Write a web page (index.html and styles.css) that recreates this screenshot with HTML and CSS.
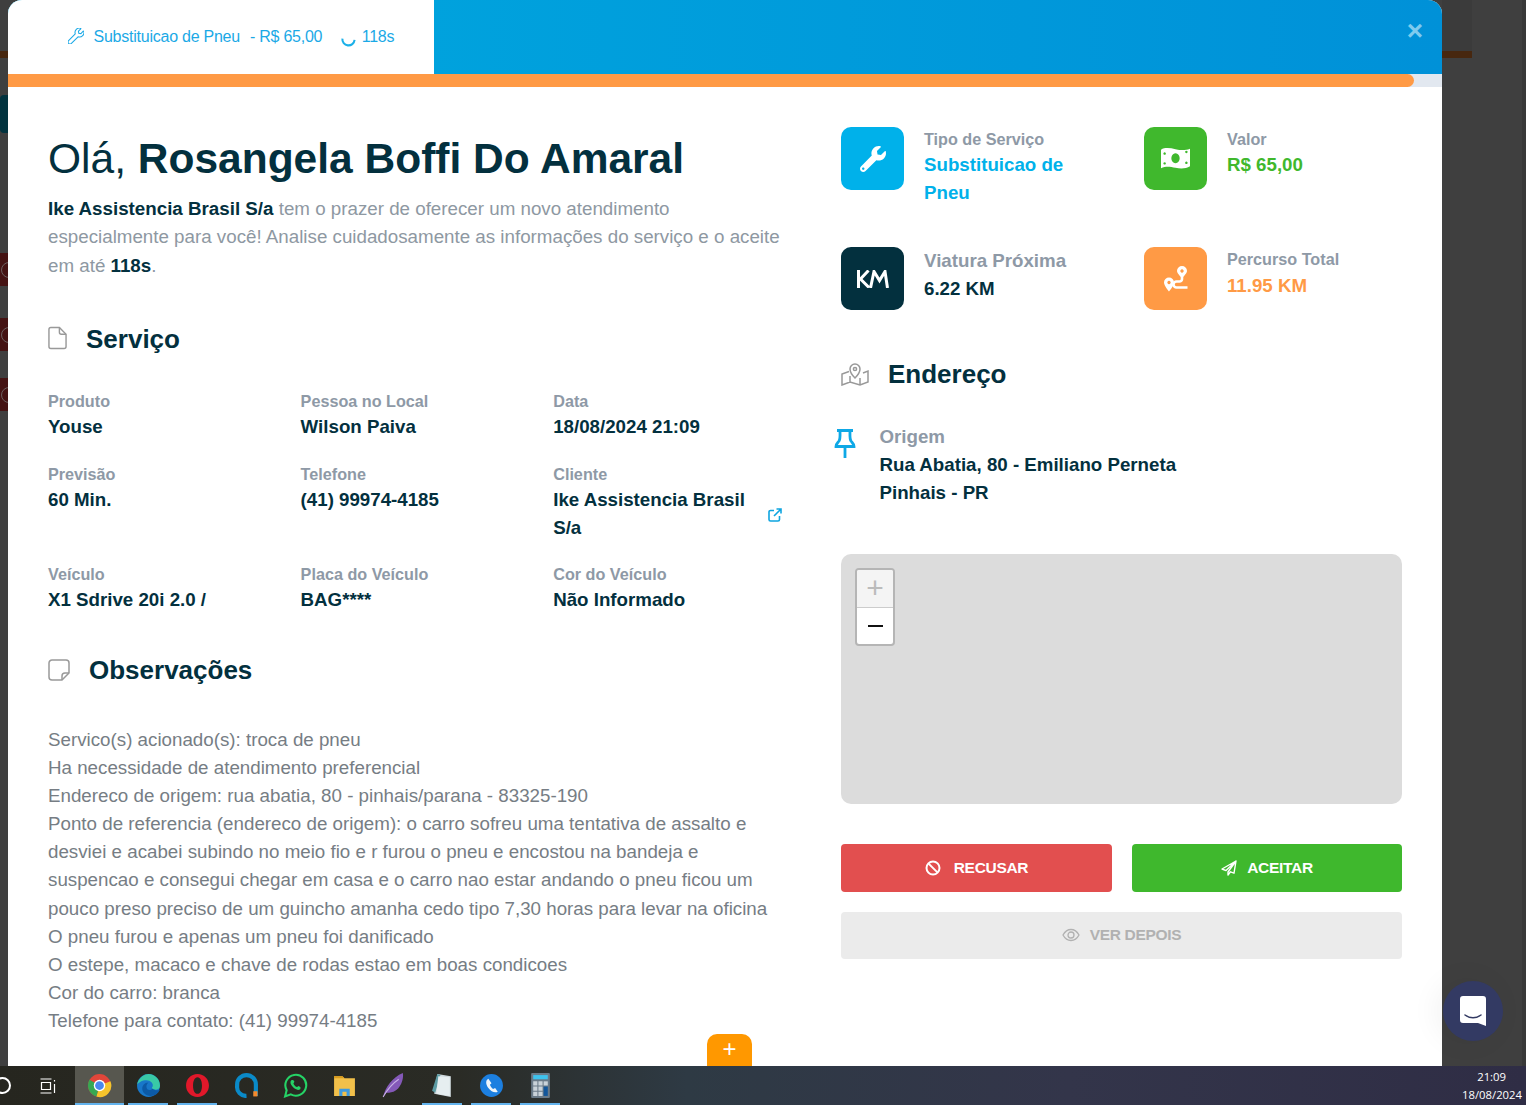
FILE: index.html
```html
<!DOCTYPE html>
<html lang="pt-BR">
<head>
<meta charset="utf-8">
<title>Novo atendimento</title>
<link rel="stylesheet" href="styles.css">
</head>
<body>
<div class="backdrop">
  <span class="bd bd-brown-l"></span><span class="bd bd-brown-r"></span><span class="bd bd-panel-r"></span><span class="bd bd-edge-r"></span>
  <span class="bd bd-teal"></span><span class="bd bd-red r1"></span><span class="bd bd-red r2"></span><span class="bd bd-red r3"></span>
</div>

<main class="modal">
  <header class="modal-head">
    <div class="head-tab">
      <svg class="tab-wrench" viewBox="0 0 512 512"><path d="M507.73 109.1c-2.24-9.03-13.54-12.09-20.12-5.51l-74.36 74.36-67.88-11.31-11.31-67.88 74.36-74.36c6.62-6.62 3.43-17.9-5.66-20.16-47.38-11.74-99.55.91-136.58 37.93-39.64 39.64-50.55 97.1-34.05 147.2L18.74 402.76c-24.99 24.99-24.99 65.51 0 90.5 24.99 24.99 65.51 24.99 90.5 0l213.21-213.21c50.12 16.71 107.47 5.68 147.37-34.22 37.07-37.07 49.7-89.32 37.91-136.73z"/></svg>
      <span class="tab-name">Substituicao de Pneu</span>
      <span class="tab-price">- R$ 65,00</span>
      <svg class="tab-spin" viewBox="0 0 16 16"><path d="M1.500 7a6.500 6.500 0 0 0 13 1.500"/></svg>
      <span>118s</span>
    </div>
    <div class="head-close">×</div>
  </header>
  <div class="progress"><div class="progress-bar"></div></div>

  <div class="modal-body">
    <section class="col-left">
      <h1 class="hello">Olá, <b>Rosangela Boffi Do Amaral</b></h1>
      <p class="intro"><b>Ike Assistencia Brasil S/a</b> tem o prazer de oferecer um novo atendimento especialmente para você! Analise cuidadosamente as informações do serviço e o aceite em até <b>118s</b>.</p>

      <h2 class="sec sec-serv">
        <svg class="sec-ico doc" viewBox="0 0 20 24"><path d="M3 1h9l7 7v13a2 2 0 0 1-2 2H3a2 2 0 0 1-2-2V3a2 2 0 0 1 2-2z"/><path d="M12 1v5a2 2 0 0 0 2 2h5"/></svg>
        Serviço
      </h2>
      <div class="fields">
        <div class="field"><span class="lb">Produto</span><span class="vl">Youse</span></div>
        <div class="field"><span class="lb">Pessoa no Local</span><span class="vl">Wilson Paiva</span></div>
        <div class="field"><span class="lb">Data</span><span class="vl">18/08/2024 21:09</span></div>
        <div class="field"><span class="lb">Previsão</span><span class="vl">60 Min.</span></div>
        <div class="field"><span class="lb">Telefone</span><span class="vl">(41) 99974-4185</span></div>
        <div class="field field-client"><span class="lb">Cliente</span>
          <div class="client-row"><span class="vl">Ike Assistencia Brasil S/a</span>
            <svg class="ext" viewBox="0 0 14 14"><path d="M11.500 8v3.500a1.500 1.500 0 0 1-1.500 1.500H2.500A1.500 1.500 0 0 1 1 11.500V4a1.500 1.500 0 0 1 1.500-1.500H6"/><path d="M8.500 1H13v4.500M13 1L6 8"/></svg>
          </div>
        </div>
        <div class="field"><span class="lb">Veículo</span><span class="vl">X1 Sdrive 20i 2.0 /</span></div>
        <div class="field"><span class="lb">Placa do Veículo</span><span class="vl">BAG****</span></div>
        <div class="field"><span class="lb">Cor do Veículo</span><span class="vl">Não Informado</span></div>
      </div>

      <h2 class="sec sec-obs">
        <svg class="sec-ico note" viewBox="0 0 22 22"><path d="M14 21H4a3 3 0 0 1-3-3V4a3 3 0 0 1 3-3h14a3 3 0 0 1 3 3v10z"/><path d="M14 21v-4a3 3 0 0 1 3-3h4"/></svg>
        Observações
      </h2>
      <p class="obs">Servico(s) acionado(s): troca de pneu<br>Ha necessidade de atendimento preferencial<br>Endereco de origem: rua abatia, 80 - pinhais/parana - 83325-190<br>Ponto de referencia (endereco de origem): o carro sofreu uma tentativa de assalto e desviei e acabei subindo no meio fio e r furou o pneu e encostou na bandeja e suspencao e consegui chegar em casa e o carro nao estar andando o pneu ficou um pouco preso preciso de um guincho amanha cedo tipo 7,30 horas para levar na oficina<br>O pneu furou e apenas um pneu foi danificado<br>O estepe, macaco e chave de rodas estao em boas condicoes<br>Cor do carro: branca<br>Telefone para contato: (41) 99974-4185</p>
    </section>

    <section class="col-right">
      <div class="stats">
        <div class="stat">
          <div class="tile t-blue"><svg class="ico-wrench" viewBox="0 0 512 512"><path fill-rule="evenodd" d="M507.73 109.1c-2.24-9.03-13.54-12.09-20.12-5.51l-74.36 74.36-67.88-11.31-11.31-67.88 74.36-74.36c6.62-6.62 3.43-17.9-5.66-20.16-47.38-11.74-99.55.91-136.58 37.93-39.64 39.64-50.55 97.1-34.05 147.2L18.74 402.76c-24.99 24.99-24.99 65.51 0 90.5 24.99 24.99 65.51 24.99 90.5 0l213.21-213.21c50.12 16.71 107.47 5.68 147.37-34.22 37.07-37.07 49.7-89.32 37.91-136.73zM64 472c-13.25 0-24-10.75-24-24 0-13.26 10.75-24 24-24s24 10.74 24 24c0 13.25-10.75 24-24 24z"/></svg></div>
          <div class="stat-txt"><span class="lb">Tipo de Serviço</span><span class="st-val c-blue">Substituicao de Pneu</span></div>
        </div>
        <div class="stat">
          <div class="tile t-green"><svg class="ico-money" viewBox="0 0 28 22"><path fill-rule="evenodd" d="M0 2.500c4-2.500 9-1.500 14-.5s9 1.500 14-.5v17c-4 2.500-9 2.500-14 1.500S5 18 0 20.500z M14 6a4 4.800 0 1 0 .01 0z M3.500 5a1.200 1.200 0 1 0 .01 0z M24.500 14a1.200 1.200 0 1 0 .01 0z M3.500 14.500a1.200 1.200 0 1 0 .01 0z M24.500 3.500a1.200 1.200 0 1 0 .01 0z"/></svg></div>
          <div class="stat-txt"><span class="lb">Valor</span><span class="st-val c-green">R$ 65,00</span></div>
        </div>
        <div class="stat">
          <div class="tile t-navy"><svg class="ico-km" viewBox="0 0 32 18"><path d="M1.500 0v18M11.500 .5L3.500 9l8.500 8.500M13.500 18L17 1.500l5.500 9 5.500-9L30.500 18"/></svg></div>
          <div class="stat-txt stat-near"><span class="lb lb-big">Viatura Próxima</span><span class="st-val c-dark">6.22 KM</span></div>
        </div>
        <div class="stat">
          <div class="tile t-orange"><svg class="ico-route" viewBox="0 0 26 26"><path class="rt" d="M19 9.500v3.500a2.500 2.500 0 0 1-2.500 2.500H13.500a2.500 2.500 0 0 0 0 6h11"/><path fill-rule="evenodd" d="M19 0a5 5 0 0 1 5 5c0 2.500-5 7-5 7s-5-4.500-5-7a5 5 0 0 1 5-5z M19 3.300a1.700 1.700 0 1 0 .01 0z M6 11.500a5 5 0 0 1 5 5c0 3-5 9-5 9s-5-6-5-9a5 5 0 0 1 5-5z M6 14.800a1.700 1.700 0 1 0 .01 0z"/></svg></div>
          <div class="stat-txt stat-route"><span class="lb">Percurso Total</span><span class="st-val c-orange">11.95 KM</span></div>
        </div>
      </div>

      <h2 class="sec sec-addr">
        <svg class="sec-ico mapi" viewBox="0 0 28 24"><path d="M8 9.500L1 12v11l8-3 10 3 8-3V9l-5 2M9 20v-6M19 23v-7"/><path d="M14 16s-5-5-5-9a5 5 0 0 1 10 0c0 4-5 9-5 9z"/><circle cx="14" cy="7" r="1.600"/></svg>
        Endereço
      </h2>
      <div class="origin">
        <svg class="pin" viewBox="0 0 22 30"><path d="M3 1.500h16M6 1.500c0 5 .5 8-1 10.500-1 1.500-3 2.500-3 5.500h18c0-3-2-4-3-5.500-1.500-2.500-1-5.500-1-10.500M11 17.500V29"/></svg>
        <div class="origin-txt">
          <span class="lb lb-orig">Origem</span>
          <span class="vl">Rua Abatia, 80 - Emiliano Perneta</span>
          <span class="vl">Pinhais - PR</span>
        </div>
      </div>
      <div class="map">
        <div class="zoom"><span class="z z-plus">+</span><span class="z z-minus"><i></i></span></div>
      </div>
      <div class="actions">
        <button class="btn b-red" type="button"><svg class="b-ico" viewBox="0 0 16 16"><circle cx="8" cy="8" r="6.500"/><path d="M3.600 3.600l8.800 8.800"/></svg>RECUSAR</button>
        <button class="btn b-green" type="button"><svg class="b-ico" viewBox="0 0 16 16"><path d="M15 1L1 9l4 1.600L15 1 7 12v3l2.500-3.200 3.500 1.400z"/></svg>ACEITAR</button>
      </div>
      <button class="btn b-grey" type="button"><svg class="b-ico eye" viewBox="0 0 18 14"><path d="M1 7s3-5.500 8-5.500S17 7 17 7s-3 5.500-8 5.500S1 7 1 7z"/><circle cx="9" cy="7" r="3"/></svg>VER DEPOIS</button>
    </section>
  </div>
  <div class="fab">+</div>
</main>

<div class="chat"><svg viewBox="0 0 28 32"><path d="M4 1h20a3 3 0 0 1 3 3v27l-8-3H4a3 3 0 0 1-3-3V4a3 3 0 0 1 3-3z" fill="#fff"/><path d="M6 20c5 3.500 11 3.500 16 0" fill="none" stroke="#333a63" stroke-width="1.500" stroke-linecap="round"/></svg></div>

<footer class="taskbar">
  <div class="search-ring"></div>
  <svg class="tv" viewBox="0 0 16 16"><path d="M1 1h11M1 15h11M2 4.500h9v7H2zM15 2v1.500M15 6v9"/></svg>
  <div class="apps">
    <span class="app active on"><svg viewBox="0 0 24 24"><circle cx="12" cy="12" r="11" fill="#e2463a"/><path d="M12 12L22.500 8A11 11 0 0 1 9 22.600z" fill="#f6c42c"/><path d="M12 12L9 22.600A11 11 0 0 1 2.400 6.500z" fill="#36a852"/><circle cx="12" cy="12" r="5.500" fill="#fff"/><circle cx="12" cy="12" r="4.200" fill="#4a88ee"/></svg></span>
    <span class="app on"><svg viewBox="0 0 24 24"><circle cx="12" cy="12" r="11" fill="#1877c9"/><path d="M1 12C2 4 9 1 12 1c6 0 11 5 11 11 0 2-1 4-4 4-2 0-5-1-3-3 1-3-2-6-6-6-4 0-8 2-9 5z" fill="#39c9a6"/><path d="M16 15c-2 2-6 2-6-2 0-2 1-3 2-4-4 0-6 3-6 6 0 3 3 7 8 7 4 0 7-2 9-6-2 1-5 1-7-1z" fill="#0c5aa6"/></svg></span>
    <span class="app on"><svg viewBox="0 0 24 24"><path fill-rule="evenodd" d="M12 1c6.500 0 11 5 11 11s-4.500 11-11 11S1 18 1 12 5.500 1 12 1zm0 3c-2.800 0-4.300 3.500-4.300 8s1.500 8 4.300 8 4.300-3.500 4.300-8-1.500-8-4.300-8z" fill="#e1182a"/></svg></span>
    <span class="app"><svg viewBox="0 0 24 24"><path d="M12 22a8.500 8.500 0 0 1-9-9.500V11a9 9 0 0 1 18 0v11" fill="none" stroke="#0a8ac8" stroke-width="4"/><rect x="18.500" y="17.500" width="4" height="5" fill="#f58a2c"/></svg></span>
    <span class="app"><svg viewBox="0 0 24 24"><path d="M2 22.500l1.500-6A10 10 0 1 1 7.500 20.500z" fill="none" stroke="#25d366" stroke-width="2"/><path d="M8 7c-1.500 1.500-1 4 1.500 6.500S14.500 17 16.500 15.500c.5-.5.500-1.500 0-2l-1.500-1-1.500 1c-1 0-3-2-3.500-3.500l1-1.500-1-1.500C9.500 6.500 8.500 6.500 8 7z" fill="#25d366"/></svg></span>
    <span class="app"><svg viewBox="0 0 24 24"><path d="M2 3h8l2 2h10v17H2z" fill="#f2c04a"/><path d="M2 3h8l2 2H2z" fill="#d99b1d"/><path d="M7 22v-7h10v7h-3v-4h-4v4z" fill="#3e9ae0"/></svg></span>
    <span class="app"><svg viewBox="0 0 24 24"><path d="M2 23C4 14 11 4 21 0c1 6-2 15-9 18-3 1-6 1-7 1z" fill="#8459b8"/><path d="M2 23C6 16 11 10 17 6" fill="none" stroke="#c9b2e4" stroke-width="1"/></svg></span>
    <span class="app on"><svg viewBox="0 0 24 24"><path d="M7 1l13 2 0 20-16-3z" fill="#cfd8dc"/><path d="M7 1l3 1 -5 17-3-2z" fill="#5c9ba3"/><path d="M8 3l11 1v18l-13-2z" fill="#e6eef0"/></svg></span>
    <span class="app on"><svg viewBox="0 0 24 24"><circle cx="12" cy="12" r="11" fill="#1c7fe0"/><path d="M9 5.500C6 7 6.500 11 9 14.500s6.500 5 9 3.500l-2.500-3.500-2 .8c-1-.5-2.500-2.500-3-4l1.500-1.500z" fill="#eef5fb"/></svg></span>
    <span class="app on"><svg viewBox="0 0 24 24"><rect x="3" y="0" width="18" height="24" rx="1" fill="#6a7a88"/><rect x="5" y="2" width="14" height="4" fill="#3ec3ee"/><path d="M5 8h4v4H5zM10 8h4v4h-4zM5 13h4v4H5zM10 13h4v4h-4zM5 18h4v4H5zM10 18h4v4h-4z" fill="#c9d2d9"/><rect x="15" y="8" width="4" height="4" fill="#c9d2d9"/><rect x="15" y="13" width="4" height="9" fill="#12569b"/></svg></span>
  </div>
  <div class="clock"><span>21:09</span><span>18/08/2024</span></div>
</footer>
</body>
</html>
```
FILE: styles.css
```css
* { box-sizing: border-box; }
html, body { margin: 0; padding: 0; height: 1105px; overflow: hidden; }
body {
  position: relative;
  background: #3f3f3f;
  font-family: "Liberation Sans", Arial, sans-serif;
  color: #03303e;
}
.backdrop { position: absolute; inset: 0; }
.bd { position: absolute; display: block; }
.bd-brown-l { left: 0; top: 51px; width: 8px; height: 7px; background: #47270f; }
.bd-brown-r { left: 1442px; top: 51px; width: 30px; height: 7px; background: #47270f; }
.bd-panel-r { left: 1442px; top: 0; width: 30px; height: 51px; background: #3b3b3b; }
.bd-edge-r { left: 1522px; top: 0; width: 4px; height: 1066px; background: #383838; }
.bd-teal { left: 0; top: 95px; width: 8px; height: 38px; background: #02333f; border-radius: 4px 0 0 4px; }
.bd-red { left: 0; width: 8px; background: #451313; overflow: hidden; }
.bd-red::after { content: ""; position: absolute; left: 1px; top: 9px; width: 14px; height: 14px; border: 1.500px solid #6d5f5f; border-radius: 50%; }
.r1 { top: 253px; height: 33px; }
.r2 { top: 318px; height: 33px; }
.r3 { top: 378px; height: 33px; }

.modal {
  position: absolute; left: 8px; top: 0; width: 1434px; height: 1066px;
  background: #fff; border-radius: 14px 14px 0 0; overflow: hidden;
}
.modal-head {
  height: 74px; display: flex; justify-content: space-between;
  background: linear-gradient(90deg, #00a9df 0%, #0091d8 100%);
}
.head-tab {
  width: 426px; background: #fff; color: #1ba9e6; font-size: 16px; letter-spacing: -0.24px;
  display: flex; align-items: center; padding: 0 0 0 60px;
}
.tab-wrench { width: 16px; height: 16px; fill: none; stroke: #1ba9e6; stroke-width: 34px; margin: -2px 9.500px 0 0; }
.tab-name { margin-right: 10px; }
.tab-spin { width: 15px; height: 15px; fill: none; stroke: #1bb0e8; stroke-width: 2.200; margin: 5px 6px 0 18.500px; }
.head-close { color: #7fcbee; font-size: 28px; font-weight: 700; line-height: 1; padding: 17px 19px 0 0; }
.progress { height: 13px; background: #e2e8f0; }
.progress-bar { width: 1406px; height: 13px; background: #ff9a45; border-radius: 0 7px 7px 0; }

.modal-body {
  display: grid; grid-template-columns: 793px 561px; padding: 40px 0 0 40px;
}
.col-left { min-width: 0; }
.hello { margin: 0; font-size: 42.5px; line-height: 64px; font-weight: 400; }
.hello b { font-weight: 700; }
.intro { margin: 4px 0 0; width: 745px; font-size: 18.760px; line-height: 28.4px; color: #8e98a2; }
.intro b { color: #03303e; }

.sec { margin: 0; font-size: 26px; line-height: 32px; font-weight: 700; display: flex; align-items: center; }
.sec-ico { fill: none; stroke: #999; stroke-width: 1.500; }
.sec-serv { margin-top: 43px; }
.doc { width: 19px; height: 24px; margin: -2px 19px 0 0; }
.fields { display: grid; grid-template-columns: repeat(3, 252.600px); margin-top: 35px; row-gap: 21.6px; }
.field { display: flex; flex-direction: column; }
.lb { font-size: 16.2px; line-height: 23px; font-weight: 700; color: #8e99a6; display: block; }
.vl { font-size: 18.720px; line-height: 28px; font-weight: 700; color: #03303e; display: block; }
.client-row { display: flex; align-items: flex-start; }
.client-row .vl { width: 215px; }
.ext { width: 14px; height: 14px; flex: none; fill: none; stroke: #0ea5e0; stroke-width: 1.600; margin-top: 22px; }

.sec-obs { margin-top: 40px; }
.note { width: 22px; height: 22px; margin-right: 19px; }
.obs { margin: 39.600px 0 0; width: 745px; font-size: 18.760px; line-height: 28.1px; color: #767d84; }

.stats { display: grid; grid-template-columns: 303px 258px; grid-auto-rows: 120px; }
.stat { display: flex; }
.tile { width: 63px; height: 63px; border-radius: 10px; flex: none; display: flex; align-items: center; justify-content: center; }
.t-blue { background: #00b1ea; }
.t-green { background: #40b82d; }
.t-navy { background: #03303e; }
.t-orange { background: #ff9a45; }
.ico-wrench { width: 26px; height: 26px; fill: #fff; }
.ico-money { width: 29px; height: 23px; fill: #fff; }
.ico-km { width: 32px; height: 18px; fill: none; stroke: #fff; stroke-width: 3; }
.ico-route { width: 26px; height: 26px; fill: #fff; }
.ico-route .rt { fill: none; stroke: #fff; stroke-width: 2.600; }
.stat-txt { margin-left: 20px; width: 172px; padding-top: 1px; }
.stat-near { padding-top: 0; }
.stat-route .st-val { margin-top: 1px; }
.st-val { display: block; font-size: 18.720px; line-height: 28px; font-weight: 700; }
.lb-big { font-size: 18.720px; line-height: 28px; }
.c-blue { color: #00b1ea; }
.c-green { color: #40b82d; }
.c-dark { color: #03303e; }
.c-orange { color: #ff9a45; }

.sec-addr { margin-top: -9px; }
.mapi { width: 28px; height: 24px; margin-right: 19px; }
.origin { display: flex; margin-top: 33px; margin-left: -7px; }
.pin { width: 22px; height: 30px; flex: none; fill: none; stroke: #0ea8e6; stroke-width: 2.800; margin-top: 6px; }
.origin-txt { margin-left: 23.500px; }
.lb-orig { font-size: 18.720px; line-height: 28px; }

.map { height: 250px; margin-top: 47px; background: #dcdcdc; border-radius: 10px; padding: 14px; }
.zoom { width: 40px; height: 78px; border: 2px solid #b5b5b5; border-radius: 4px; background: #fff; overflow: hidden; display: flex; flex-direction: column; }
.z { flex: 1; display: flex; align-items: center; justify-content: center; }
.z-plus { background: #f4f4f4; color: #bbb; font-size: 30px; border-bottom: 1px solid #ccc; font-weight: 400; line-height: 1; }
.z-minus i { display: block; width: 15px; height: 2px; background: #111; }

.actions { display: grid; grid-template-columns: 271px 270px; column-gap: 20px; margin-top: 40px; }
.btn {
  display: flex; align-items: center; justify-content: center; border: 0; border-radius: 4px;
  font-family: inherit; font-size: 15.500px; font-weight: 700; letter-spacing: -0.3px; color: #fff; height: 48px; padding: 0;
}
.b-red { background: #e24f4f; }
.b-green { background: #3fb82d; }
.b-grey { background: #ebebeb; color: #b1b1b1; width: 561px; height: 47px; margin-top: 20px; padding-bottom: 2px; }
.b-ico { width: 16px; height: 16px; margin-right: 13px; fill: none; stroke: #fff; stroke-width: 2; }
.b-green .b-ico { stroke-width: 1.400; stroke-linejoin: round; margin-right: 10px; }
.eye { width: 18px; height: 14px; stroke: #b1b1b1; stroke-width: 1.300; margin-right: 10px; }

.fab {
  position: absolute; left: 699px; top: 1034px; width: 45px; height: 32px;
  background: #ff9800; color: #fff; border-radius: 10px 10px 0 0;
  font-size: 24px; line-height: 29px; text-align: center;
}

.chat {
  position: absolute; left: 1443px; top: 981px; width: 60px; height: 60px; border-radius: 50%;
  background: #333a63; display: flex; align-items: center; justify-content: center;
  box-shadow: -6px 0 30px rgba(0,0,0,.06);
}
.chat svg { width: 28px; height: 32px; }

.taskbar {
  position: absolute; left: 0; top: 1066px; width: 1526px; height: 39px;
  background: linear-gradient(90deg, #26261f 0%, #2a2b25 30%, #2e3a44 45%, #33354a 70%, #2f2d45 100%);
  display: flex; align-items: center;
}
.search-ring { position: absolute; left: -6px; top: 11px; width: 17px; height: 17px; border: 2px solid #fff; border-radius: 50%; }
.tv { position: absolute; left: 39px; top: 12px; width: 17px; height: 16px; fill: none; stroke: #fff; stroke-width: 1.200; }
.apps { position: absolute; left: 74.500px; top: 0; display: flex; height: 39px; }
.app { width: 49px; height: 39px; display: flex; align-items: center; justify-content: center; position: relative; }
.app svg { width: 25px; height: 25px; }
.app.active { background: #57574f; }
.app.on::after { content: ""; position: absolute; left: 4.500px; right: 4.500px; bottom: 0; height: 2px; background: #63b3ed; }
.app.active.on::after { left: 0; right: 0; }
.clock {
  position: absolute; right: 4px; top: 2px; color: #fff; font-family: "Open Sans", sans-serif;
  font-size: 11.300px; line-height: 18px; display: flex; flex-direction: column; align-items: flex-end;
}
.clock span:first-child { margin-right: 16px; }
```
